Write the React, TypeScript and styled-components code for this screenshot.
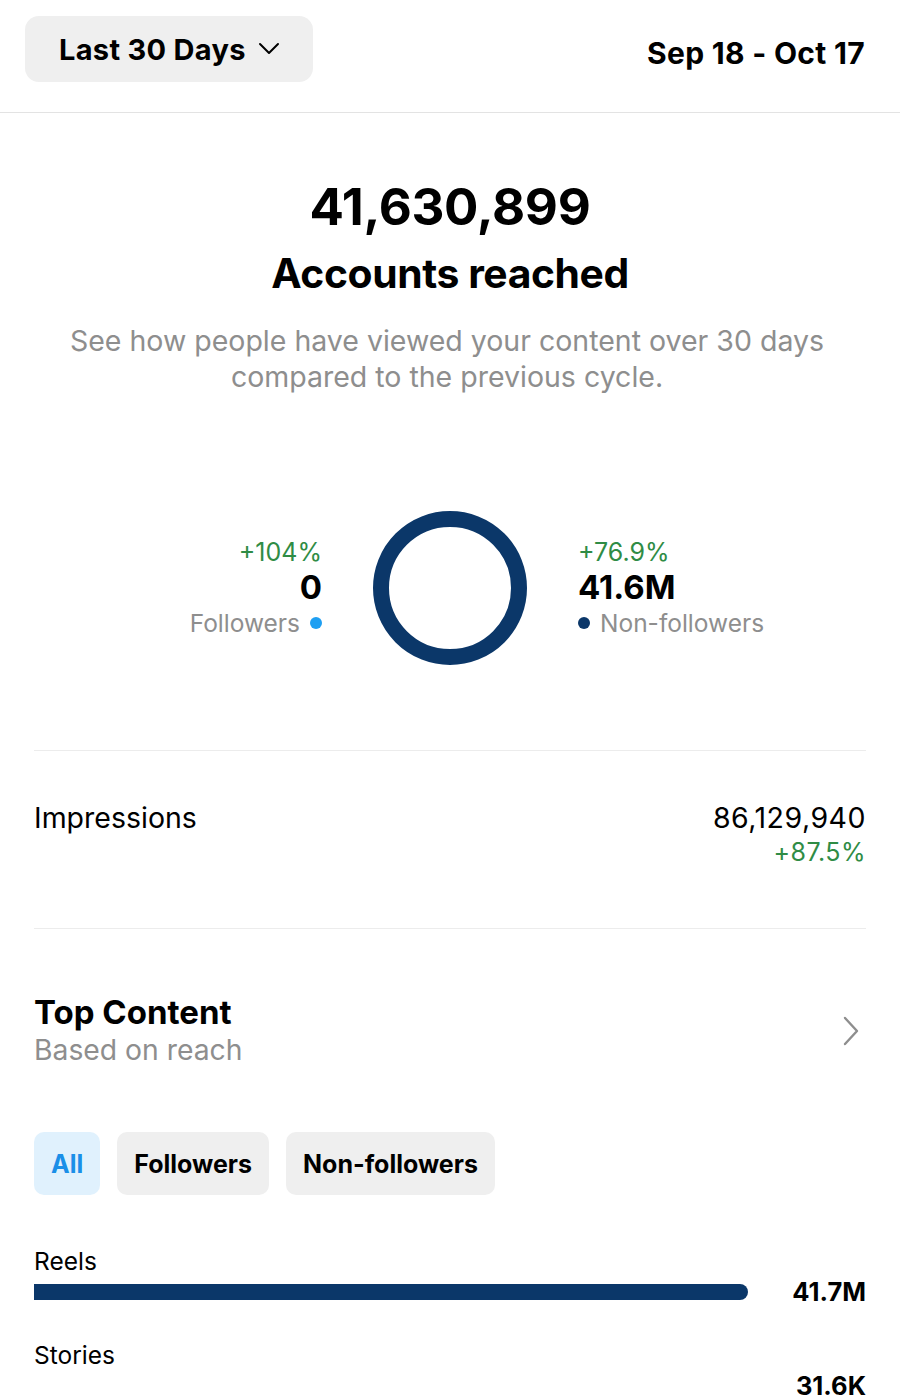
import styled, { createGlobalStyle } from "styled-components";

const GlobalStyle = createGlobalStyle`
  html, body {
    margin: 0;
    padding: 0;
    background: #ffffff;
  }
  body {
    font-family: Inter, "Noto Sans", "Liberation Sans", sans-serif;
    color: #000;
    -webkit-font-smoothing: antialiased;
  }
`;

const NAVY = "#0b3769";
const GREEN = "#2f8c45";
const GRAY = "#8e8e8e";
const SKY = "#1e9ff2";

const Page = styled.div`
  width: 900px;
  min-height: 1400px;
  background: #fff;
  overflow: hidden;
`;

const Header = styled.header`
  display: flex;
  align-items: center;
  justify-content: space-between;
  padding: 16px 35px 30px 25px;
  border-bottom: 1px solid #e3e3e3;
`;

const RangeButton = styled.button`
  display: flex;
  align-items: center;
  gap: 12px;
  height: 66px;
  width: 288px;
  padding: 0 0 0 34px;
  border: none;
  border-radius: 14px;
  background: #efefef;
  font-family: inherit;
  font-size: 29px;
  font-weight: 700;
  letter-spacing: 0.3px;
  color: #000;
`;

const DateRange = styled.div`
  font-size: 30px;
  font-weight: 700;
  letter-spacing: 0.3px;
  padding-top: 8px;
`;

const Hero = styled.section`
  display: flex;
  flex-direction: column;
  align-items: center;
  text-align: center;
  padding-top: 63px;
`;

const BigNumber = styled.div`
  font-size: 51px;
  font-weight: 700;
  line-height: 62px;
  letter-spacing: -0.3px;
`;

const HeroTitle = styled.h1`
  margin: 11px 0 0;
  font-size: 40.8px;
  font-weight: 700;
  line-height: 48px;
  letter-spacing: -0.4px;
`;

const HeroText = styled.p`
  margin: 26px 6px 0 0;
  font-size: 28.5px;
  line-height: 36px;
  color: ${GRAY};
`;

const Split = styled.div`
  display: grid;
  grid-template-columns: 1fr auto 1fr;
  align-items: center;
  column-gap: 51px;
  margin-top: 116px;
`;

const Side = styled.div<{ $align: "left" | "right" }>`
  display: flex;
  flex-direction: column;
  align-items: ${(p) => (p.$align === "right" ? "flex-end" : "flex-start")};
`;

const Change = styled.div<{ $size?: number }>`
  color: ${GREEN};
  font-size: ${(p) => p.$size ?? 25}px;
  line-height: 34px;
`;

const StatValue = styled.div`
  font-size: 33px;
  font-weight: 700;
  line-height: 36px;
`;

const Legend = styled.div`
  display: flex;
  align-items: center;
  gap: 10px;
  font-size: 24.5px;
  line-height: 36px;
  color: ${GRAY};
`;

const Dot = styled.span<{ $color: string }>`
  width: 12px;
  height: 12px;
  border-radius: 50%;
  background: ${(p) => p.$color};
`;

const Donut = styled.div`
  width: 122px;
  height: 122px;
  border-radius: 50%;
  border: 16px solid ${NAVY};
`;

const Content = styled.div`
  padding: 0 34px;
`;

const Divider = styled.hr<{ $top?: number }>`
  margin: ${(p) => p.$top ?? 0}px 0 0;
  border: none;
  border-top: 1px solid #ececec;
`;

const MetricRow = styled.div`
  display: flex;
  justify-content: space-between;
  padding: 50px 0 59px;
  font-size: 28.5px;
  line-height: 34px;
`;

const MetricValue = styled.div`
  display: flex;
  flex-direction: column;
  align-items: flex-end;
  letter-spacing: 0.5px;
`;

const SectionHead = styled.div`
  display: flex;
  align-items: center;
  justify-content: space-between;
  padding-top: 64px;

  svg {
    margin-right: 5px;
  }
`;

const SectionTitle = styled.h2`
  margin: 0;
  font-size: 33px;
  font-weight: 700;
  line-height: 38px;
`;

const SectionSub = styled.div`
  font-size: 28.3px;
  line-height: 38px;
  color: ${GRAY};
`;

const Chips = styled.div`
  display: flex;
  gap: 17px;
  margin-top: 63px;
`;

const Chip = styled.button<{ $active?: boolean }>`
  height: 63px;
  padding: 0 17px;
  border: none;
  border-radius: 10px;
  font-family: inherit;
  font-size: 25px;
  font-weight: 700;
  background: ${(p) => (p.$active ? "#e0f1fd" : "#efefef")};
  color: ${(p) => (p.$active ? "#1a8fe8" : "#000")};
`;

const Breakdown = styled.div`
  display: flex;
  flex-direction: column;
  gap: 32px;
  margin-top: 51px;
`;

const BarItem = styled.div`
  display: flex;
  flex-direction: column;
`;

const BarLabel = styled.div`
  font-size: 24.5px;
  line-height: 30px;
`;

const BarRow = styled.div`
  display: grid;
  grid-template-columns: 1fr 118px;
  align-items: center;
  height: 32px;
`;

const Track = styled.div`
  height: 16px;
`;

const Fill = styled.div`
  height: 100%;
  background: ${NAVY};
  border-radius: 0 8px 8px 0;
`;

const BarValue = styled.div`
  text-align: right;
  font-size: 25.5px;
  font-weight: 700;
  margin-top: -2px;
`;

const bars = [
  { label: "Reels", value: 41.7e6, text: "41.7M" },
  { label: "Stories", value: 31.6e3, text: "31.6K" },
];

export default function App() {
  const max = Math.max(...bars.map((b) => b.value));
  return (
    <Page>
      <GlobalStyle />
      <Header>
        <RangeButton>
          Last 30 Days
          <svg width="22" height="14" viewBox="0 0 22 14" fill="none">
            <polyline points="2,2 11,11 20,2" stroke="#000" strokeWidth="2" strokeLinecap="round" strokeLinejoin="round" />
          </svg>
        </RangeButton>
        <DateRange>Sep 18 - Oct 17</DateRange>
      </Header>

      <Hero>
        <BigNumber>41,630,899</BigNumber>
        <HeroTitle>Accounts reached</HeroTitle>
        <HeroText>
          See how people have viewed your content over 30 days
          <br />
          compared to the previous cycle.
        </HeroText>
      </Hero>

      <Split>
        <Side $align="right">
          <Change>+104%</Change>
          <StatValue>0</StatValue>
          <Legend>
            Followers <Dot $color={SKY} />
          </Legend>
        </Side>
        <Donut />
        <Side $align="left">
          <Change>+76.9%</Change>
          <StatValue>41.6M</StatValue>
          <Legend>
            <Dot $color={NAVY} /> Non-followers
          </Legend>
        </Side>
      </Split>

      <Content>
        <Divider $top={85} />
        <MetricRow>
          <div>Impressions</div>
          <MetricValue>
            <div>86,129,940</div>
            <Change>+87.5%</Change>
          </MetricValue>
        </MetricRow>
        <Divider />

        <SectionHead>
          <div>
            <SectionTitle>Top Content</SectionTitle>
            <SectionSub>Based on reach</SectionSub>
          </div>
          <svg width="20" height="32" viewBox="0 0 20 32" fill="none">
            <polyline points="4,3 16,16 4,29" stroke={GRAY} strokeWidth="2.4" strokeLinecap="round" strokeLinejoin="round" />
          </svg>
        </SectionHead>

        <Chips>
          <Chip $active>All</Chip>
          <Chip>Followers</Chip>
          <Chip>Non-followers</Chip>
        </Chips>

        <Breakdown>
          {bars.map((b) => (
            <BarItem key={b.label}>
              <BarLabel>{b.label}</BarLabel>
              <BarRow>
                <Track>
                  {b.value / max > 0.01 && <Fill style={{ width: `${(b.value / max) * 100}%` }} />}
                </Track>
                <BarValue>{b.text}</BarValue>
              </BarRow>
            </BarItem>
          ))}
        </Breakdown>
      </Content>
    </Page>
  );
}
